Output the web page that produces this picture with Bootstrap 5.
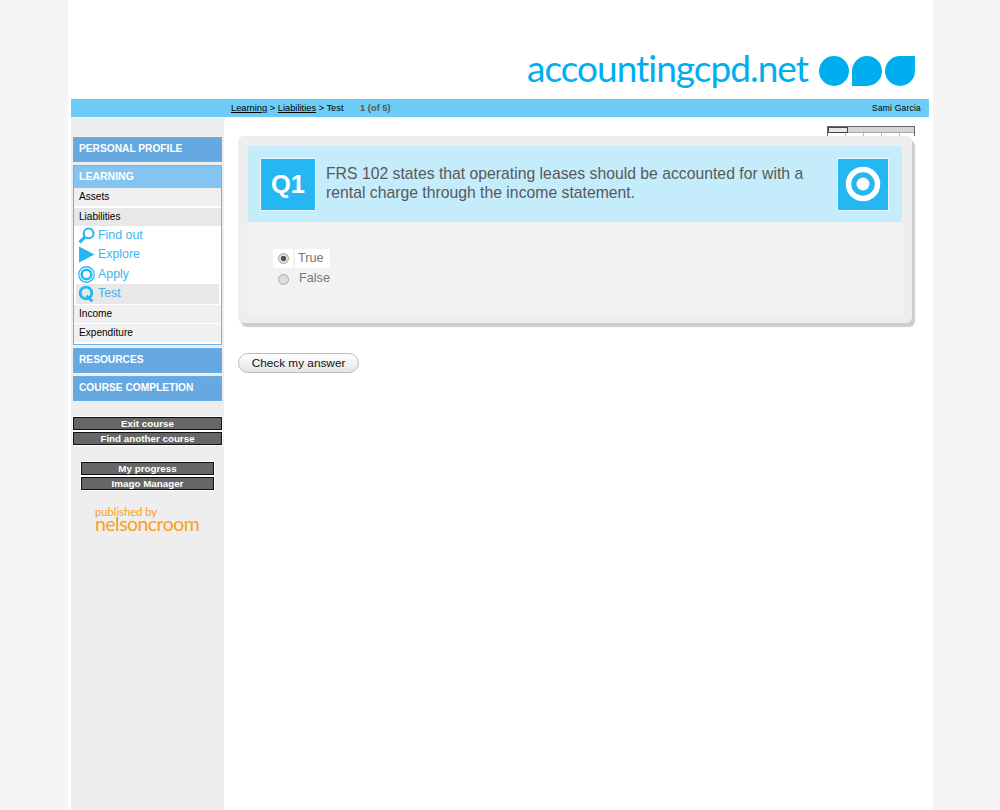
<!DOCTYPE html>
<html lang="en">
<head>
<meta charset="utf-8">
<title>accountingcpd.net</title>
<link href="https://cdn.jsdelivr.net/npm/bootstrap@5.3.0/dist/css/bootstrap.min.css" rel="stylesheet">
<style>
html,body{height:810px;overflow:hidden}
body{background:#f5f5f5;font-family:"Liberation Sans",Arial,sans-serif;color:#000}
a{color:inherit}
.shell{width:865px;height:810px;margin-left:68px;background:#fff}
.masthead{height:99px;padding:0 18px 8px 0}
.brand{font-family:Lato,"Liberation Sans",sans-serif;font-weight:400;font-size:37px;line-height:44px;color:#00aeef;letter-spacing:-1px;margin-right:11px;margin-bottom:1px}
.crumbbar{height:18px;width:858px;margin-left:3px;background:#6dcdf7;font-size:9.3px;line-height:18px;padding:0 8px 0 160px}
.crumbbar .pos{color:#555;margin-left:14px;font-weight:700}
.crumbbar .who{font-size:8.5px;letter-spacing:.2px}
.sidecol{width:153px;margin-left:3px;height:693px;background:#eee;padding:20px 2px 0 2px;flex:none}
.menuhead{background:#66a9e0;color:#fff;font-weight:700;font-size:10.2px;height:25px;line-height:21px;padding-left:5px;margin-bottom:3px;border:1px solid #6aaee4}
.menuopen{border:1px solid #73b1e6;background:#fff;margin-bottom:3px;height:180px}
.menuopen .menutop{background:#84c4f0;color:#fff;font-weight:700;font-size:10.5px;height:22px;line-height:21px;padding-left:5px}
.subitem{background:#f0f0f0;height:18px;line-height:17px;font-size:10.1px;padding-left:5px;margin-bottom:1.5px}
.subitem.cur{background:#e8e8e8;margin-bottom:0}
.subitem.low{margin-top:1px}
.stage{height:19.5px;font-size:12.4px;color:#3fb4ee;display:flex;align-items:center;gap:3px;padding-left:4px;margin-right:2px}
.stage.cur{background:#e8e8e8;margin-left:2px;padding-left:2px}
.stage svg{width:17px;height:17px;flex:none}
.darkbtn{background:#666;color:#fff;border:1px solid #111;outline:1px solid #fff;font-weight:700;font-size:9.8px;line-height:11px;height:13px;text-align:center;margin-bottom:2px}
.group1{margin-top:16px;width:149px}
.group2{margin:17px 0 0 8px;width:133px}
.pub{color:#f9a11b;margin:17px 0 0 22px;font-family:Lato,"Liberation Sans",sans-serif;line-height:1}
.pub .by{font-size:11.2px;line-height:10px;display:block}
.pub .nc{font-size:19.5px;line-height:14px;font-weight:400;letter-spacing:-.55px;display:block}
.maincol{padding:9px 0 0 14px;width:690px}
.strip{width:88px;height:10px;margin-left:589px;border:1px solid #666;border-bottom:0;background:repeating-linear-gradient(90deg,#fff 0 17px,#bbb 17px 18px)}
.striptop{height:6px;background:#d6d6d6;border-bottom:1px solid #aaa}
.striptop i{display:block;width:20px;height:6px;background:#e6e6e6;border:1px solid #444}
.qcard{width:674px;height:187px;background:#eee;border-radius:6px;padding:10px 9px;box-shadow:3px 4px 1px #ccc}
.qhead{height:76px;background:#c5ecfb;padding:12px 13px 12px 12px;margin:0 1px;width:654px}
.qtile{width:56px;height:53px;background:#25b7f1;border:1px solid #e9f8fe;color:#fff;flex:none}
.qtile.num{font-weight:700;font-size:25.5px}
.qtile.goal{margin-left:auto;width:52px}
.qtext{font-size:15.75px;line-height:18.6px;color:#595959;margin-left:10px;width:500px}
.qbody{height:93px;background:#f2f2f2;padding:26px 0 0 26px;width:656px}
.optrow{height:20px;font-size:12.7px;color:#777;display:flex;align-items:center}
.optrow .form-check-input{width:11px;height:11px;margin:0;background:#ddd;border:1px solid #aaa;flex:none}
.optrow .form-check-input:checked{background:#ddd radial-gradient(circle,#555 0,#555 2.5px,transparent 3px);border-color:#aaa}
.optbox{background:#fff;width:20px;height:19px;display:flex;align-items:center;justify-content:center}
.optrow.on label{background:#fff;margin-left:2px;padding:0 6px 0 3px;line-height:19px}
.optrow.off{margin-top:1px}
.optrow.off .optbox{background:none}
.optrow.off label{margin-left:6px}
.checkbtn{margin-top:30px;width:121px;height:20px;border:1px solid #bbb;border-radius:10px;background:linear-gradient(#fff,#e4e4e4);font-size:11.8px;line-height:17px;color:#111;padding:0;display:block}
</style>
</head>
<body>
<div class="shell">
  <header class="masthead d-flex justify-content-end align-items-end">
    <span class="brand">accountingcpd.net</span>
    <svg width="96" height="32" viewBox="0 0 96 32" role="img" aria-label="logo" class="mb-1">
      <path fill="#00aeef" d="M15 1a15 15 0 1 1 0 30a15 15 0 0 1 0-30z"/>
      <path fill="#00aeef" d="M33 31V16a15 15 0 1 1 15 15z"/>
      <path fill="#00aeef" d="M96 1v15a15 15 0 1 1-15-15z"/>
    </svg>
  </header>
  <nav class="crumbbar d-flex justify-content-between">
    <span><a href="#">Learning</a> &gt; <a href="#">Liabilities</a> &gt; Test <span class="pos">1 (of 5)</span></span>
    <span class="who">Sami Garcia</span>
  </nav>
  <div class="d-flex">
    <aside class="sidecol">
      <div class="menuhead">PERSONAL PROFILE</div>
      <div class="menuopen">
        <div class="menutop">LEARNING</div>
        <div class="subitem">Assets</div>
        <div class="subitem cur">Liabilities</div>
        <div class="stage"><svg viewBox="0 0 16 16"><circle cx="10" cy="6" r="4.6" fill="none" stroke="#25b7f1" stroke-width="2"/><path d="M6.5 9.5L1.5 14.5" stroke="#25b7f1" stroke-width="3"/></svg>Find out</div>
        <div class="stage"><svg viewBox="0 0 16 16"><path d="M1 0.5L15.5 8L1 15.5z" fill="#25b7f1"/></svg>Explore</div>
        <div class="stage"><svg viewBox="0 0 16 16"><circle cx="8" cy="8" r="7.3" fill="none" stroke="#25b7f1" stroke-width="1.2"/><circle cx="8" cy="8" r="4.5" fill="none" stroke="#25b7f1" stroke-width="2.4"/></svg>Apply</div>
        <div class="stage cur"><svg viewBox="0 0 16 16"><circle cx="7.5" cy="7.5" r="5.5" fill="none" stroke="#25b7f1" stroke-width="2.6"/><path d="M8 10L13.5 15.5" stroke="#25b7f1" stroke-width="2.6"/></svg>Test</div>
        <div class="subitem low">Income</div>
        <div class="subitem mb-0">Expenditure</div>
      </div>
      <div class="menuhead">RESOURCES</div>
      <div class="menuhead">COURSE COMPLETION</div>
      <div class="group1">
        <div class="darkbtn">Exit course</div>
        <div class="darkbtn">Find another course</div>
      </div>
      <div class="group2">
        <div class="darkbtn">My progress</div>
        <div class="darkbtn">Imago Manager</div>
      </div>
      <div class="pub"><span class="by">published by</span><span class="nc">nelsoncroom</span></div>
    </aside>
    <main class="maincol">
      <div class="strip"><div class="striptop"><i></i></div></div>
      <section class="qcard">
        <div class="qhead d-flex align-items-center">
          <div class="qtile num d-flex align-items-center justify-content-center">Q1</div>
          <div class="qtext">FRS 102 states that operating leases should be accounted for with a rental charge through the income statement.</div>
          <div class="qtile goal d-flex align-items-center justify-content-center">
            <svg width="36" height="36" viewBox="0 0 36 36"><circle cx="18" cy="18" r="14.5" fill="none" stroke="#fff" stroke-width="5.5"/><circle cx="18" cy="18" r="6.5" fill="#fff"/></svg>
          </div>
        </div>
        <div class="qbody">
          <div class="optrow on"><span class="optbox"><input class="form-check-input" type="radio" name="q1" id="optT" checked></span><label for="optT">True</label></div>
          <div class="optrow off"><span class="optbox"><input class="form-check-input" type="radio" name="q1" id="optF"></span><label for="optF">False</label></div>
        </div>
      </section>
      <button type="button" class="btn checkbtn">Check my answer</button>
    </main>
  </div>
</div>
<script src="https://cdn.jsdelivr.net/npm/bootstrap@5.3.0/dist/js/bootstrap.bundle.min.js"></script>
</body>
</html>
